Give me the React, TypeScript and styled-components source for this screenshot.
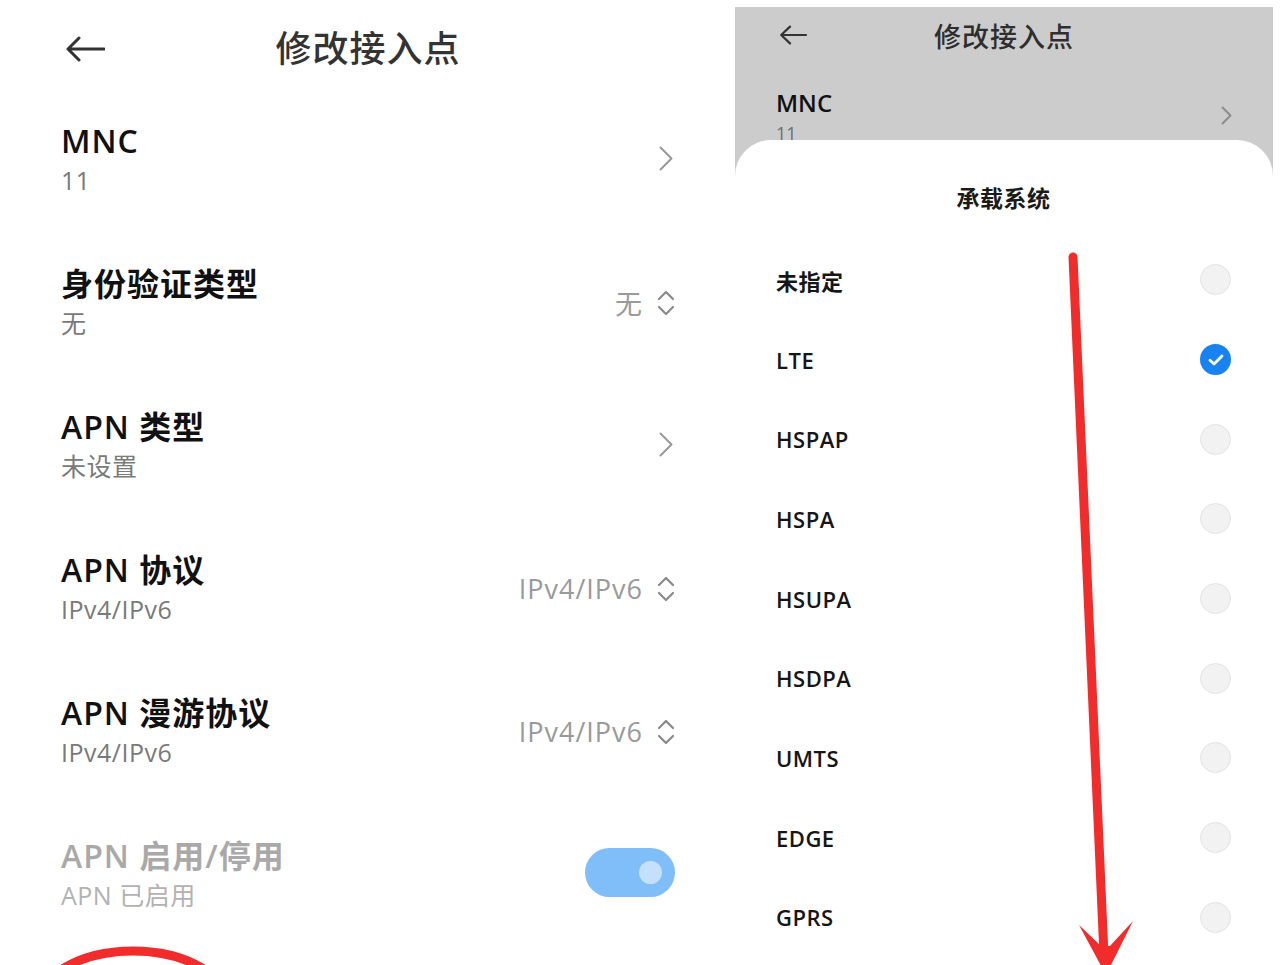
import React from "react";
import styled, { createGlobalStyle } from "styled-components";

const FONT = `"Open Sans", "Noto Sans CJK SC", sans-serif`;

const GlobalStyle = createGlobalStyle`
  html, body {
    margin: 0;
    padding: 0;
    background: #ffffff;
    overflow: hidden;
  }
  * {
    box-sizing: border-box;
  }
`;

type RightKind =
  | { type: "chevron" }
  | { type: "select"; value: string }
  | { type: "toggle" };

interface SettingRow {
  title: string;
  sub: string;
  disabled?: boolean;
  right: RightKind;
}

const rows: SettingRow[] = [
  { title: "MNC", sub: "11", right: { type: "chevron" } },
  { title: "身份验证类型", sub: "无", right: { type: "select", value: "无" } },
  { title: "APN 类型", sub: "未设置", right: { type: "chevron" } },
  { title: "APN 协议", sub: "IPv4/IPv6", right: { type: "select", value: "IPv4/IPv6" } },
  { title: "APN 漫游协议", sub: "IPv4/IPv6", right: { type: "select", value: "IPv4/IPv6" } },
  { title: "APN 启用/停用", sub: "APN 已启用", disabled: true, right: { type: "toggle" } },
];

const bearers = ["未指定", "LTE", "HSPAP", "HSPA", "HSUPA", "HSDPA", "UMTS", "EDGE", "GPRS"];
const selectedBearer = "LTE";

const BackArrow: React.FC<{ w: number; h: number; stroke: number }> = ({ w, h, stroke }) => (
  <svg width={w} height={h} viewBox={`0 0 ${w} ${h}`} fill="none">
    <path
      d={`M${w - 1} ${h / 2} H${stroke} M${h / 2 + 1} ${stroke / 2 + 0.5} L${stroke} ${h / 2} L${h / 2 + 1} ${h - stroke / 2 - 0.5}`}
      stroke="#333"
      strokeWidth={stroke}
      strokeLinecap="round"
      strokeLinejoin="round"
    />
  </svg>
);

const ChevronRight: React.FC<{ w: number; h: number; color?: string }> = ({ w, h, color = "#9a9a9a" }) => (
  <svg width={w} height={h} viewBox={`0 0 ${w} ${h}`} fill="none">
    <path
      d={`M1.5 1.5 L${w - 1.5} ${h / 2} L1.5 ${h - 1.5}`}
      stroke={color}
      strokeWidth={2}
      strokeLinecap="round"
      strokeLinejoin="round"
    />
  </svg>
);

const UpDown = () => (
  <svg width="18" height="28" viewBox="0 0 18 28" fill="none">
    <path
      d="M2 10 L9 3 L16 10 M2 18 L9 25 L16 18"
      stroke="#8a8a8a"
      strokeWidth={2.2}
      strokeLinecap="round"
      strokeLinejoin="round"
    />
  </svg>
);

const App: React.FC = () => {
  return (
    <>
      <GlobalStyle />
      <Page>
        <LeftPanel>
          <Header>
            <ArrowSlot>
              <BackArrow w={40} h={26} stroke={3} />
            </ArrowSlot>
            <HeaderTitle>修改接入点</HeaderTitle>
            <span />
          </Header>

          {rows.map((r) => (
            <Row key={r.title}>
              <TextBlock>
                <RowTitle $disabled={r.disabled}>{r.title}</RowTitle>
                <RowSub $disabled={r.disabled}>{r.sub}</RowSub>
              </TextBlock>
              {r.right.type === "chevron" && (
                <ChevronSlot>
                  <ChevronRight w={14} h={25} />
                </ChevronSlot>
              )}
              {r.right.type === "select" && (
                <SelectValue>
                  <span>{r.right.value}</span>
                  <UpDown />
                </SelectValue>
              )}
              {r.right.type === "toggle" && (
                <Toggle>
                  <Knob />
                </Toggle>
              )}
            </Row>
          ))}
        </LeftPanel>

        <RightPanel>
          <DimmedTop>
            <MiniHeader>
              <MiniArrowSlot>
                <BackArrow w={28} h={20} stroke={2.2} />
              </MiniArrowSlot>
              <MiniTitle>修改接入点</MiniTitle>
              <span />
            </MiniHeader>
            <MiniRow>
              <div>
                <MiniRowTitle>MNC</MiniRowTitle>
                <MiniRowSub>11</MiniRowSub>
              </div>
              <MiniChevron>
                <ChevronRight w={11} h={19} color="#8c8c8c" />
              </MiniChevron>
            </MiniRow>
          </DimmedTop>

          <Sheet>
            <SheetTitle>承载系统</SheetTitle>
            <OptionList>
              {bearers.map((b) => (
                <Option key={b}>
                  <OptionLabel>{b}</OptionLabel>
                  <Radio $checked={b === selectedBearer}>
                    {b === selectedBearer && (
                      <svg width="16" height="12" viewBox="0 0 16 12" fill="none">
                        <path
                          d="M2 6.2 L6 10 L14 2"
                          stroke="#fff"
                          strokeWidth={2.8}
                          strokeLinecap="round"
                          strokeLinejoin="round"
                        />
                      </svg>
                    )}
                  </Radio>
                </Option>
              ))}
            </OptionList>
          </Sheet>
        </RightPanel>

        {/* red annotation marks drawn over the screenshots */}
        <Annotations viewBox="0 0 1280 965">
          <ellipse cx="133" cy="1011" rx="99" ry="60" fill="none" stroke="#f22b2b" strokeWidth="9" />
          <line x1="1073" y1="257" x2="1104" y2="955" stroke="#f22b2b" strokeWidth="9" strokeLinecap="round" />
          <polygon points="1106,975 1079,925 1101,946 1110,946 1133,921" fill="#f22b2b" />
        </Annotations>
      </Page>
    </>
  );
};

export default App;

// ===== styled-components =====

const Page = styled.div`
  position: relative;
  display: flex;
  width: 1280px;
  height: 965px;
  overflow: hidden;
  background: #ffffff;
  font-family: ${FONT};
`;

const LeftPanel = styled.div`
  width: 735px;
  flex-shrink: 0;
  padding: 0 60px 0 61px;
  display: flex;
  flex-direction: column;
`;

const Header = styled.div`
  height: 90px;
  padding-top: 8px;
  display: grid;
  grid-template-columns: 1fr auto 1fr;
  align-items: center;
`;

const ArrowSlot = styled.div`
  display: flex;
  padding-left: 4px;
`;

const HeaderTitle = styled.h1`
  margin: 0;
  font-size: 36px;
  font-weight: 500;
  color: #333333;
  letter-spacing: 1px;
  line-height: 44px;
`;

const Row = styled.div`
  height: 143px;
  flex-shrink: 0;
  display: flex;
  align-items: center;
  justify-content: space-between;
`;

const TextBlock = styled.div`
  display: flex;
  flex-direction: column;
  gap: 3px;
  margin-top: -6px;
`;

const RowTitle = styled.div<{ $disabled?: boolean }>`
  font-size: 32px;
  line-height: 40px;
  font-weight: 600;
  letter-spacing: 1px;
  color: ${(p) => (p.$disabled ? "#a9a9a9" : "#111111")};
`;

const RowSub = styled.div<{ $disabled?: boolean }>`
  font-size: 25px;
  line-height: 33px;
  letter-spacing: 0.5px;
  color: ${(p) => (p.$disabled ? "#b2b2b2" : "#7a7a7a")};
`;

const ChevronSlot = styled.div`
  display: flex;
  margin-top: -6px;
  padding-right: 2px;
`;

const SelectValue = styled.div`
  display: flex;
  align-items: center;
  gap: 14px;
  margin-top: -4px;
  font-size: 27px;
  letter-spacing: 1px;
  color: #9a9a9a;
`;

const Toggle = styled.div`
  width: 90px;
  height: 49px;
  border-radius: 25px;
  background: #80bef9;
  display: flex;
  align-items: center;
  justify-content: flex-end;
  padding-right: 13px;
  margin-top: -8px;
`;

const Knob = styled.div`
  width: 23px;
  height: 23px;
  border-radius: 50%;
  background: #c4e0fc;
`;

const RightPanel = styled.div`
  width: 538px;
  flex-shrink: 0;
  margin-top: 7px;
  height: 958px;
  background: #cccccc;
  display: flex;
  flex-direction: column;
  overflow: hidden;
`;

const DimmedTop = styled.div`
  height: 133px;
  flex-shrink: 0;
  overflow: hidden;
  padding: 0 41px;
`;

const MiniHeader = styled.div`
  height: 56px;
  display: grid;
  grid-template-columns: 1fr auto 1fr;
  align-items: center;
`;

const MiniArrowSlot = styled.div`
  display: flex;
  padding-left: 3px;
`;

const MiniTitle = styled.div`
  font-size: 27px;
  font-weight: 500;
  color: #2e2e2e;
  letter-spacing: 1px;
`;

const MiniRow = styled.div`
  display: flex;
  justify-content: space-between;
  align-items: flex-start;
  padding-top: 25px;
`;

const MiniRowTitle = styled.div`
  font-size: 24px;
  line-height: 30px;
  font-weight: 600;
  color: #111111;
`;

const MiniRowSub = styled.div`
  margin-top: 4px;
  font-size: 18px;
  line-height: 22px;
  color: #6e6e6e;
`;

const MiniChevron = styled.div`
  display: flex;
  margin-top: 18px;
`;

const Sheet = styled.div`
  flex: 1;
  background: #ffffff;
  border-radius: 36px 36px 0 0;
  padding: 40px 42px 0 41px;
`;

const SheetTitle = styled.div`
  text-align: center;
  font-size: 23px;
  line-height: 36px;
  font-weight: 600;
  color: #1a1a1a;
  letter-spacing: 0.5px;
`;

const OptionList = styled.div`
  margin-top: 24px;
  display: flex;
  flex-direction: column;
`;

const Option = styled.div`
  height: 79.7px;
  display: flex;
  align-items: center;
  justify-content: space-between;
`;

const OptionLabel = styled.span`
  font-size: 22px;
  font-weight: 600;
  letter-spacing: 0.5px;
  color: #161616;
`;

const Radio = styled.div<{ $checked: boolean }>`
  width: 31px;
  height: 31px;
  border-radius: 50%;
  display: flex;
  align-items: center;
  justify-content: center;
  background: ${(p) => (p.$checked ? "#1882f0" : "#f2f2f2")};
  border: ${(p) => (p.$checked ? "none" : "1.5px solid #e3e3e3")};
`;

const Annotations = styled.svg`
  position: absolute;
  inset: 0;
  width: 1280px;
  height: 965px;
  pointer-events: none;
`;
